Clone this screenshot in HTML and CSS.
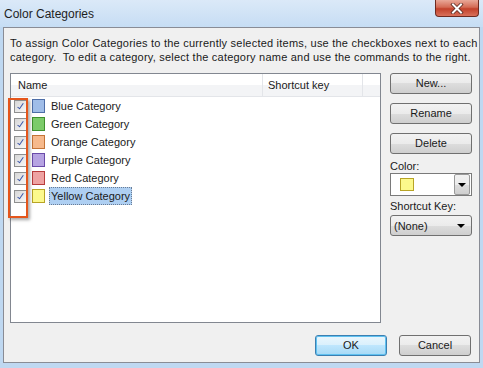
FILE: index.html
```html
<!DOCTYPE html>
<html>
<head lang="en">
    <meta charset="UTF-8">
    <title>Color Categories</title>
    <link rel="stylesheet" href="styles.css">
</head>
<body>
    <div class="titlebar">
        <span class="title">Color Categories</span>
        <div class="close">
            <svg width="20" height="11" viewBox="0 0 20 11">
                <path d="M6 1.5 L14 9.5 M14 1.5 L6 9.5" stroke="#5a2a22" stroke-width="3.6" stroke-linecap="square"/>
                <path d="M6 1.5 L14 9.5 M14 1.5 L6 9.5" stroke="#ffffff" stroke-width="2" stroke-linecap="square"/>
            </svg>
        </div>
    </div>
    <div class="frame">
        <p class="intro">To assign Color Categories to the currently selected items, use the checkboxes next to each<br>category.&nbsp; To edit a category, select the category name and use the commands to the right.</p>
        <div class="main">
            <div class="list">
                <div class="list-head">
                    <div class="col col-name">Name</div>
                    <div class="col col-key">Shortcut key</div>
                    <div class="col col-rest"></div>
                </div>
                <div class="rows">
                    <div class="row"><span class="check"></span><span class="swatch blue"></span><span class="label">Blue Category</span></div>
                    <div class="row"><span class="check"></span><span class="swatch green"></span><span class="label">Green Category</span></div>
                    <div class="row"><span class="check"></span><span class="swatch orange"></span><span class="label">Orange Category</span></div>
                    <div class="row"><span class="check"></span><span class="swatch purple"></span><span class="label">Purple Category</span></div>
                    <div class="row"><span class="check"></span><span class="swatch red"></span><span class="label">Red Category</span></div>
                    <div class="row"><span class="check"></span><span class="swatch yellow"></span><span class="label selected">Yellow Category</span></div>
                </div>
                <div class="mark"></div>
            </div>
            <div class="side">
                <div class="btn">New...</div>
                <div class="btn">Rename</div>
                <div class="btn">Delete</div>
                <div class="field-label first">Color:</div>
                <div class="color-combo">
                    <span class="swatch yellow big"></span>
                    <span class="drop"><span class="arrow"></span></span>
                </div>
                <div class="field-label">Shortcut Key:</div>
                <div class="key-combo">
                    <span>(None)</span>
                    <span class="arrow"></span>
                </div>
            </div>
        </div>
        <div class="footer">
            <div class="btn default">OK</div>
            <div class="btn">Cancel</div>
        </div>
    </div>
</body>
</html>
```

FILE: styles.css
```css
body{
    margin: 0;
    width: 483px;
    height: 368px;
    overflow: hidden;
    background: #bfd8f1;
    font-family: "Liberation Sans", Arial, sans-serif;
    font-size: 11px;
    color: #1a1a1a;
}
.titlebar{
    height: 27px;
    display: flex;
    justify-content: space-between;
    align-items: flex-start;
    background: linear-gradient(#dbe9f8, #c6ddf4);
}
.title{
    margin: 7px 0 0 4px;
    font-size: 12px;
    color: #1e1e1e;
}
.close{
    width: 44px;
    height: 17px;
    margin-right: 4px;
    border: 1px solid #6e2a20;
    border-top: none;
    border-radius: 0 0 4px 4px;
    background: linear-gradient(#e9a898, #d46b55 45%, #c2412b 55%, #d9705a);
    display: flex;
    align-items: center;
    justify-content: center;
    box-sizing: border-box;
}
.frame{
    margin-left: 3px;
    width: 462px;
    height: 334px;
    border: 1px solid #898c95;
    background: #f0f0f0;
    padding: 0 7px 0 6px;
    display: flex;
    flex-direction: column;
}
.intro{
    margin: 8px 0 0 0;
    line-height: 14px;
    letter-spacing: 0.22px;
    white-space: nowrap;
}
.main{
    display: flex;
    margin-top: 9px;
}
.list{
    position: relative;
    width: 369px;
    height: 248px;
    border: 1px solid #828790;
    background: #ffffff;
}
.list-head{
    display: flex;
    height: 22px;
    border-bottom: 1px solid #e3e5e9;
    background: linear-gradient(#ffffff 50%, #f3f4f6 50%);
}
.col{
    line-height: 22px;
    border-right: 1px solid #e3e5e9;
}
.col-name{
    width: 244px;
    padding-left: 7px;
}
.col-key{
    width: 94px;
    padding-left: 5px;
}
.col-rest{
    flex: 1;
    border-right: none;
}
.row{
    height: 18px;
    display: flex;
    align-items: center;
    padding-left: 3px;
}
.check{
    width: 11px;
    height: 11px;
    border: 1px solid #8e8f8f;
    background: linear-gradient(135deg, #d6d6d6, #f8f8f8);
    position: relative;
}
.check::after{
    content: "";
    position: absolute;
    left: 4px;
    top: 1px;
    width: 2px;
    height: 6px;
    border-right: 1.5px solid #3a55a8;
    border-bottom: 1.5px solid #3a55a8;
    transform: rotate(35deg);
}
.swatch{
    width: 11px;
    height: 12px;
    margin-left: 5px;
    border: 1px solid;
}
.blue{ background: #a0bde8; border-color: #4e6ea8; }
.green{ background: #7ccb6a; border-color: #3f8f2e; }
.orange{ background: #f6b98c; border-color: #c47438; }
.purple{ background: #b6a3e2; border-color: #6a4ba9; }
.red{ background: #eea2a2; border-color: #b83c3c; }
.yellow{ background: #fcf98c; border-color: #b8a426; }
.label{
    margin-left: 4px;
    padding: 0 1px;
    line-height: 16px;
    border: 1px dotted transparent;
}
.label.selected{
    background: #aecff2;
    border-color: #6a7c94;
}
.mark{
    position: absolute;
    left: -3px;
    top: 24px;
    width: 16px;
    height: 116px;
    border: 2px solid #e5561c;
    box-shadow: 2px 2px 3px rgba(0, 0, 0, 0.35);
}
.side{
    margin-left: 9px;
    width: 82px;
    display: flex;
    flex-direction: column;
}
.btn{
    height: 19px;
    line-height: 19px;
    text-align: center;
    border: 1px solid #707070;
    border-radius: 3px;
    background: linear-gradient(#f2f2f2, #ebebeb 50%, #dddddd 50%, #cfcfcf);
    margin-bottom: 9px;
}
.field-label{
    line-height: 14px;
    margin-top: 3px;
}
.field-label.first{
    margin-top: -4px;
}
.color-combo{
    height: 21px;
    border: 1px solid #7a7a7a;
    background: #ffffff;
    display: flex;
    align-items: center;
    justify-content: space-between;
}
.swatch.big{
    width: 12px;
    height: 11px;
    margin-left: 9px;
}
.drop{
    width: 14px;
    height: 19px;
    margin-right: 1px;
    border: 1px solid #9a9a9a;
    border-radius: 2px;
    background: linear-gradient(#f2f2f2, #ebebeb 50%, #dddddd 50%, #cfcfcf);
    display: flex;
    align-items: center;
    justify-content: center;
}
.arrow{
    width: 0;
    height: 0;
    border-left: 4px solid transparent;
    border-right: 4px solid transparent;
    border-top: 4px solid #000000;
}
.key-combo{
    margin-top: 2px;
    height: 19px;
    border: 1px solid #707070;
    border-radius: 3px;
    background: linear-gradient(#f2f2f2, #ebebeb 50%, #dddddd 50%, #cfcfcf);
    display: flex;
    align-items: center;
    justify-content: space-between;
    padding: 0 6px 0 3px;
}
.footer{
    display: flex;
    justify-content: flex-end;
    gap: 12px;
    margin-top: 12px;
    padding-right: 1px;
}
.footer .btn{
    width: 70px;
    margin-bottom: 0;
}
.btn.default{
    border-color: #3c7fb1;
    background: linear-gradient(#eaf6fd, #d9f0fc 50%, #bee6fd 50%, #a7d9f5);
    box-shadow: inset 0 0 0 1px #5fc1f0;
}
```
